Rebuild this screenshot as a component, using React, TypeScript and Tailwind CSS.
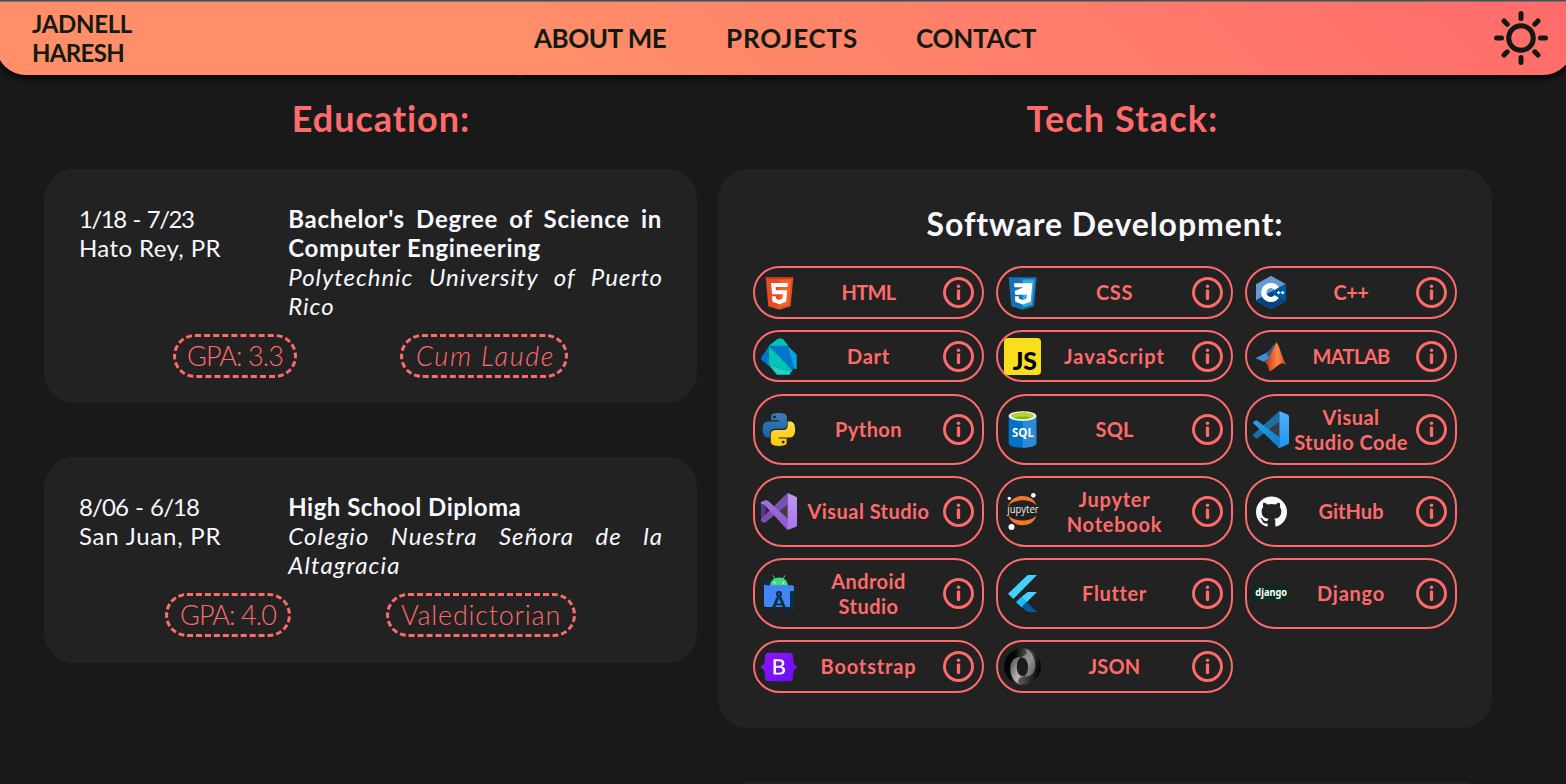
import React from "react";
import { SiBootstrap, SiGithub } from "react-icons/si";

const Svg = ({ children }: { children: React.ReactNode }) => (
  <svg viewBox="0 0 111 111" className="h-[37px] w-[37px] shrink-0 overflow-visible">
    {children}
  </svg>
);

const Html = () => (
  <Svg>
    <path d="M14 10H97L89 97L55.500 107L22 97Z" fill="#e44d26" />
    <path d="M55.500 16H90L83 92L55.500 100Z" fill="#f16529" />
    <path d="M14 10H97L96.500 14H14.500Z" fill="#b93c1c" />
    <path d="M30 27H81L79.500 39H44L45 49H78.500L75.500 83L55 91L34.500 83L33 67H44.500L45.500 74L55 78L64.500 74L66 61H33.500Z" fill="#fff" />
  </Svg>
);

const Css = () => (
  <Svg>
    <path d="M14 10H98L90 97L56 107L22 97Z" fill="#1572b6" />
    <path d="M56 16H91L84 92L56 100Z" fill="#33a9dc" />
    <path d="M30 28H85L80 83L56 91.500L34 83L33 67H44.500L45.500 74L56 78L67.500 74L69 62H34L32 51L58 40H31Z" fill="#fff" />
  </Svg>
);

const Cpp = () => (
  <Svg>
    <g strokeLinejoin="round" strokeWidth="4">
      <path d="M54 8L97 32V79L54 103L11 79V32Z" fill="#659ad2" stroke="#659ad2" />
      <path d="M54 56L97 32V79Z" fill="#00599c" stroke="#00599c" />
      <path d="M11 80L54 56L97 79L54 103Z" fill="#004482" stroke="#004482" />
      <path d="M54 56L97 32V79Z" fill="#00599c" />
    </g>
    <path d="M71 44A21 21 0 1 0 71 67" fill="none" stroke="#fff" strokeWidth="15.500" />
    <path d="M72 56H82M77 51V61M84 56H94M89 51V61" stroke="#fff" strokeWidth="3.600" />
  </Svg>
);

const Dart = () => (
  <Svg>
    <path d="M23 24L46 5Q57 -3 66 3L80 20V25Z" fill="#00c4b3" />
    <path d="M24 23V84L20 82L1 65Q-1 61 2 57Z" fill="#0075c9" />
    <path d="M24 23H80L101 88L91 101Z" fill="#0075c9" />
    <path d="M80 23L107 50V93L101 94Z" fill="#00a8e1" />
    <path d="M24 24L95 98L90 102L24 82Z" fill="#00c4b3" />
    <path d="M24 82L90 101L86 110H48Z" fill="#22d3c5" />
  </Svg>
);

const Js = () => (
  <Svg>
    <rect width="111" height="111" rx="12" fill="#f7df1e" />
    <text x="26" y="95" textLength="73" lengthAdjust="spacingAndGlyphs" className="font-[Lato,sans-serif] text-[72px] font-black" fill="#000">JS</text>
  </Svg>
);

const Matlab = () => (
  <Svg>
    <defs>
      <linearGradient id="mlOrange" x1="0" x2="1">
        <stop offset="0" stopColor="#a32b25" />
        <stop offset=".3" stopColor="#e2542d" />
        <stop offset=".6" stopColor="#fb8a44" />
        <stop offset="1" stopColor="#b5382c" />
      </linearGradient>
    </defs>
    <path d="M7 61L34 47Q48 44 63 18L58 42L46 62L33 71Z" fill="#3f8fd6" />
    <path d="M40 46Q52 40 64 16L60 40L46 58Z" fill="#2b5f80" />
    <path d="M70 12C80 24 89 66 102 83Q91 71 83 78C70 82 63 96 49 100C47 86 42 75 33 71Q44 68 51 53T70 12Z" fill="url(#mlOrange)" />
  </Svg>
);

const snake =
  "M14.25.18l.9.2.73.26.59.3.45.32.34.34.25.34.16.33.1.3.04.26.02.2-.01.13V8.5l-.05.63-.13.55-.21.46-.26.38-.3.31-.33.25-.35.19-.35.14-.33.1-.3.07-.26.04-.21.02H8.77l-.69.05-.59.14-.5.22-.41.27-.33.32-.27.35-.2.36-.15.37-.1.35-.07.32-.04.27-.02.21v3.06H3.17l-.21-.03-.28-.07-.32-.12-.35-.18-.36-.26-.36-.36-.35-.46-.32-.59-.28-.73-.21-.88-.14-1.05-.05-1.23.06-1.22.16-1.04.24-.87.32-.71.36-.57.4-.44.42-.33.42-.24.4-.16.36-.1.32-.05.24-.01h.16l.06.01h8.16v-.83H6.18l-.01-2.75-.02-.37.05-.34.11-.31.17-.28.25-.26.31-.23.38-.2.44-.18.51-.15.58-.12.64-.1.71-.06.77-.04.84-.02 1.27.05zm-6.3 1.98l-.23.33-.08.41.08.41.23.34.33.22.41.09.41-.09.33-.22.23-.34.08-.41-.08-.41-.23-.33-.33-.22-.41-.09-.41.09z";

const Python = () => (
  <Svg>
    <defs>
      <linearGradient id="pyBlue" x1="0" y1="0" x2="0" y2="1">
        <stop offset="0" stopColor="#3b7ebb" />
        <stop offset="1" stopColor="#1a62a5" />
      </linearGradient>
      <linearGradient id="pyYellow" x1="0" y1="0" x2="0" y2="1">
        <stop offset="0" stopColor="#ffc800" />
        <stop offset="1" stopColor="#ffdc4c" />
      </linearGradient>
    </defs>
    <g transform="translate(5 6) scale(4.080)">
      <path d={snake} fill="url(#pyBlue)" />
      <path d={snake} fill="url(#pyYellow)" transform="rotate(180 11.900 12.100)" />
    </g>
  </Svg>
);

const Sql = () => (
  <Svg>
    <path d="M14 15V97C14 115 97 115 97 97V15Z" fill="#0072c6" />
    <path d="M56 15V110.500C78 110 97 105 97 97V15Z" fill="#2b8bd6" />
    <ellipse cx="55.500" cy="15" rx="41.500" ry="14.500" fill="#fff" />
    <ellipse cx="55.500" cy="14.500" rx="34" ry="10" fill="#7fba00" />
    <path d="M21.500 14C22 1 89 1 89.500 14C89 17 84 20 80 21C76 15 35 15 31 21C27 20 22 17 21.500 14Z" fill="#b8d432" />
    <text x="24" y="78" textLength="66" lengthAdjust="spacingAndGlyphs" className="font-['Open_Sans',sans-serif] text-[36px] font-bold" fill="#fff">SQL</text>
  </Svg>
);

const VsCode = () => (
  <Svg>
    <defs>
      <linearGradient id="vscBand" x1="0" y1="0" x2="1" y2="1">
        <stop offset="0" stopColor="#2aa0ea" />
        <stop offset="1" stopColor="#0b7fcb" />
      </linearGradient>
      <linearGradient id="vscPanel" x1="0" y1="0" x2="0" y2="1">
        <stop offset="0" stopColor="#4fb0f7" />
        <stop offset="1" stopColor="#2196f3" />
      </linearGradient>
    </defs>
    <path d="M78 31V80L48 56Z" fill="#3d3d40" />
    <path d="M79 0V32L11 84L1 75Q-1 72 2 69Z" fill="#1d6da6" />
    <path d="M1 37Q-1 34 2 32L10 27L79 79V111Z" fill="url(#vscBand)" />
    <path d="M79 0L105 11Q108 13 108 16V95Q108 98 105 100L80 111Q74 110 77 107L79 103Z" fill="url(#vscPanel)" />
  </Svg>
);

const VisualStudio = () => (
  <Svg>
    <defs>
      <linearGradient id="vsBand" x1="0" y1="0" x2="1" y2="1">
        <stop offset="0" stopColor="#a377d8" />
        <stop offset="1" stopColor="#8a55cc" />
      </linearGradient>
      <linearGradient id="vsPanel" x1="0" y1="0" x2="0" y2="1">
        <stop offset="0" stopColor="#c198f2" />
        <stop offset="1" stopColor="#a973ec" />
      </linearGradient>
    </defs>
    <path d="M81 33V78L54 56Z" fill="#3e3e40" />
    <path d="M0 27L14 22V89L0 84Z" fill="#5b3590" />
    <path d="M14 40V72L30 56Z" fill="#35224f" />
    <path d="M79 0L81 34L14 88Q6 90 1 84L0 78Z" fill="#7c4fb5" />
    <path d="M0 27L14 22Q19 21 22 24L81 78V111L77 109L11 36Q5 32 0 33Z" fill="url(#vsBand)" />
    <path d="M80 0L105 11Q108 12 108 15V97Q108 100 105 101L80 111Z" fill="url(#vsPanel)" />
  </Svg>
);

const Jupyter = () => (
  <Svg>
    <path d="M14 37C24 0 87 0 97 37C80 17 31 17 14 37Z" fill="#f37726" />
    <path d="M14 68C24 106 87 106 97 68C80 87 31 87 14 68Z" fill="#f37726" />
    <circle cx="88" cy="7" r="7" fill="#fff" />
    <circle cx="16" cy="16" r="5" fill="#fff" />
    <circle cx="22.500" cy="102" r="9" fill="#fff" />
    <text x="10" y="60" textLength="94" lengthAdjust="spacingAndGlyphs" className="font-['Open_Sans',sans-serif] text-[31px]" fill="#f2f2f5">jupyter</text>
  </Svg>
);

const AndroidStudio = () => (
  <Svg>
    <path d="M10 31V20Q10 14 17 14H38V31ZM87 45H99V104Q99 111 93 111T87 104Z" fill="#073042" />
    <path d="M27 33C28 -1 80 -1 81 33Z" fill="#3ddc84" />
    <path d="M42 12L36 1M66 12L72 1" stroke="#3ddc84" strokeWidth="3" />
    <circle cx="41" cy="23" r="2.500" fill="#fff" />
    <circle cx="67" cy="23" r="2.500" fill="#fff" />
    <path d="M16 31H93Q99 31 99 38V48H87V96H16Q9 96 9 89V26Q10 31 16 31Z" fill="#4285f4" />
    <path d="M54 48V58M51 66L34 108M57 66L74 108" stroke="#073042" strokeWidth="9" />
    <path d="M41 84Q54 94 67 84" fill="none" stroke="#073042" strokeWidth="5" />
    <circle cx="54" cy="57" r="9" fill="#073042" />
    <circle cx="54" cy="57" r="3" fill="#2b62b8" />
  </Svg>
);

const Flutter = () => (
  <Svg>
    <path d="M71 0H99L28 72L12 56Z" fill="#44d1fd" />
    <path d="M71 51H99L68 82L52 66Z" fill="#44d1fd" />
    <path d="M52 97L68 81L99 111H71Z" fill="#08589c" />
    <path d="M36 81L52 66L68 81L52 97Z" fill="#1fbcfd" />
  </Svg>
);

const Bootstrap = () => (
  <span className="flex h-[37px] w-[37px] shrink-0 items-center">
    <svg className="absolute h-0 w-0">
      <linearGradient id="bsPurple" x1="0" y1="0" x2="1" y2="1">
        <stop offset="0" stopColor="#9013fe" />
        <stop offset="1" stopColor="#6610f2" />
      </linearGradient>
    </svg>
    <span className="flex h-9 w-9 items-center justify-center bg-[linear-gradient(#fff,#fff)] bg-[length:16px_20px] bg-center bg-no-repeat">
      <SiBootstrap className="h-9 w-9" style={{ fill: "url(#bsPurple)" }} />
    </span>
  </span>
);

const Github = () => (
  <span className="flex h-[37px] w-[37px] shrink-0 items-center pl-[3px]">
    <SiGithub className="h-[31px] w-[31px] text-[#f8f8ff]" />
  </span>
);

const Django = () => (
  <Svg>
    <rect y="31" width="109" height="48" rx="2" fill="#092e20" />
    <text x="7" y="64" textLength="95" lengthAdjust="spacingAndGlyphs" className="font-['Noto_Sans',sans-serif] text-[34px] font-bold" fill="#fff">django</text>
  </Svg>
);

const Json = () => (
  <Svg>
    <defs>
      <linearGradient id="jsBase" x1="0" y1=".4" x2="1" y2=".6">
        <stop offset="0" stopColor="#000" />
        <stop offset=".25" stopColor="#0a0a0a" />
        <stop offset=".55" stopColor="#555" />
        <stop offset=".85" stopColor="#1c1c1c" />
        <stop offset="1" stopColor="#000" />
      </linearGradient>
      <linearGradient id="jsL" x1="0" y1="0" x2="1" y2="1">
        <stop offset="0" stopColor="#4c4c4c" />
        <stop offset=".65" stopColor="#b8b8b8" />
        <stop offset="1" stopColor="#666" />
      </linearGradient>
      <linearGradient id="jsR" x1="0" y1="0" x2="1" y2="1">
        <stop offset="0" stopColor="#777" />
        <stop offset=".5" stopColor="#969696" />
        <stop offset="1" stopColor="#555" />
      </linearGradient>
    </defs>
    <circle cx="55.500" cy="55.500" r="55" fill="url(#jsBase)" />
    <path d="M62 1C82 10 94 28 94 50C94 74 82 86 63 86C78 72 76 28 52 28C60 22 78 20 62 1Z" fill="url(#jsR)" />
    <path d="M49 110C29 101 19 84 19 62C19 38 32 27 49 28C33 42 36 84 58 85C50 90 36 94 49 110Z" fill="url(#jsL)" />
    <ellipse cx="55" cy="56.500" rx="16.500" ry="27" fill="#1c1c1c" />
  </Svg>
);

type Skill = { name: string; track: string; Icon: () => React.JSX.Element };

const skills: Skill[] = [
  { name: "HTML", track: "tracking-[-0.67px]", Icon: Html },
  { name: "CSS", track: "tracking-[0.61px]", Icon: Css },
  { name: "C++", track: "tracking-[-0.48px]", Icon: Cpp },
  { name: "Dart", track: "tracking-[0.75px]", Icon: Dart },
  { name: "JavaScript", track: "tracking-[1.08px]", Icon: Js },
  { name: "MATLAB", track: "tracking-[-0.64px]", Icon: Matlab },
  { name: "Python", track: "tracking-[0.43px]", Icon: Python },
  { name: "SQL", track: "tracking-[0.16px]", Icon: Sql },
  { name: "Visual\nStudio Code", track: "tracking-[0.47px]", Icon: VsCode },
  { name: "Visual Studio", track: "tracking-[0.45px]", Icon: VisualStudio },
  { name: "Jupyter\nNotebook", track: "tracking-[0.75px]", Icon: Jupyter },
  { name: "GitHub", track: "tracking-[0.03px]", Icon: Github },
  { name: "Android\nStudio", track: "tracking-[0.45px]", Icon: AndroidStudio },
  { name: "Flutter", track: "tracking-[0.64px]", Icon: Flutter },
  { name: "Django", track: "tracking-[0.76px]", Icon: Django },
  { name: "Bootstrap", track: "tracking-[0.85px]", Icon: Bootstrap },
  { name: "JSON", track: "tracking-[0.22px]", Icon: Json },
];

const Info = () => (
  <svg viewBox="0 0 31 31" className="h-[31px] w-[31px] shrink-0" fill="none" stroke="#ff6b6b">
    <circle cx="15.500" cy="15.500" r="14" strokeWidth="2.900" />
    <circle cx="15.500" cy="9.300" r="1.800" fill="#ff6b6b" stroke="none" />
    <path d="M15.500 13.800V21.500" strokeWidth="3.300" strokeLinecap="round" />
  </svg>
);

const SkillPill = ({ name, track, Icon }: Skill) => (
  <li className="flex items-center rounded-[30px] border-2 border-[#ff6b6b] pr-[8px] pl-[6px]">
    <Icon />
    <span className={`flex-1 pr-[4px] text-center text-[20px] leading-[25px] font-bold whitespace-pre text-[#ff6b6b] ${track}`}>{name}</span>
    <Info />
  </li>
);

const tag = "h-11 rounded-[22px] border-[3px] border-dashed border-[#ff6b6b] text-center text-[27px] leading-[37px] font-light whitespace-nowrap text-[#ff6b6b]";

const Sun = () => (
  <svg viewBox="0 0 56 56" className="h-14 w-14" fill="none" stroke="#121a12" strokeWidth="5" strokeLinecap="round">
    <circle cx="28" cy="28" r="12.300" />
    <path d="M28 3.500V8.500M28 47.500V52.500M3.500 28H8.500M47.500 28H52.500M11 11L14.200 14.200M41.800 41.800L45 45M45 11L41.800 14.200M14.200 41.800L11 45" />
  </svg>
);

export default function App() {
  return (
    <div className="relative h-[784px] w-full overflow-hidden bg-[#191919] font-[Lato,sans-serif] text-[#f8f8ff]">
      <div className="h-px bg-[#4d5a63]" />
      <div className="absolute top-[73px] left-[515px] h-[4px] w-[10px] rounded-full bg-[#4a4a4c]" />
      <div className="absolute top-[73px] left-[728px] h-[4px] w-[10px] rounded-full bg-[#4a4a4c]" />
      <header className="relative -ml-[4px] grid h-[74px] w-[1577px] grid-cols-[538px_1fr_61px] rounded-b-[30px] border-t border-[#8a6f68] bg-[linear-gradient(45deg,#ff8e69_35%,#ff6b6b)] pr-[22px] text-[#121a12] shadow-[0_3px_6px_#000]">
        <div className="pt-[7px] pl-[36px] text-[24px] leading-[29px] font-bold">
          <div className="tracking-[-0.31px]">JADNELL</div>
          <div className="tracking-[-0.67px]">HARESH</div>
        </div>
        <nav className="flex items-center text-[26px] font-bold">
          <a className="w-[192px] tracking-[-0.49px]">ABOUT ME</a>
          <a className="w-[190px] tracking-[0.81px]">PROJECTS</a>
          <a className="tracking-[-0.27px]">CONTACT</a>
        </nav>
        <div className="-mt-px flex items-center justify-center">
          <Sun />
        </div>
      </header>

      <main className="flex items-start gap-[21px] pt-[21px] pl-[44px]">
        <section className="w-[653px]">
          <h2 className="pl-[21px] text-center text-[36px] leading-[45px] font-bold tracking-[0.94px] text-[#ff6b6b]">Education:</h2>
          <article className="mt-[28px] h-[234px] rounded-[30px] bg-[#222] px-[35px] pt-[35px]">
            <div className="flex text-[24px] leading-[29px]">
              <div className="w-[210px]">
                <div className="tracking-[-1.5px] [word-spacing:2.2px]">1/18 - 7/23</div>
                <div className="tracking-[0.4px]">Hato Rey, PR</div>
              </div>
              <div className="w-[375px] text-justify">
                <div className="font-bold tracking-[0.68px]">Bachelor's Degree of Science in Computer Engineering</div>
                <div className="-mr-px tracking-[0.95px] italic">Polytechnic University of Puerto Rico</div>
              </div>
            </div>
            <div className="mt-[14px] flex gap-[103px] pl-[94px]">
              <div className={`${tag} w-[124px] tracking-[-0.91px]`}>GPA: 3.3</div>
              <div className={`${tag} w-[168px] pl-[3px] tracking-[1.6px] italic`}>Cum Laude</div>
            </div>
          </article>
          <article className="mt-[54px] h-[206px] rounded-[30px] bg-[#222] px-[35px] pt-[35px]">
            <div className="flex text-[24px] leading-[29px]">
              <div className="w-[210px]">
                <div className="tracking-[-0.9px] [word-spacing:1.8px]">8/06 - 6/18</div>
                <div className="tracking-[0.76px]">San Juan, PR</div>
              </div>
              <div className="w-[375px] text-justify">
                <div className="font-bold tracking-[0.48px]">High School Diploma</div>
                <div className="-mr-px tracking-[1.1px] italic">Colegio Nuestra Señora de la Altagracia</div>
              </div>
            </div>
            <div className="mt-[14px] flex gap-[95px] pl-[86px]">
              <div className={`${tag} w-[126px] tracking-[-0.9px]`}>GPA: 4.0</div>
              <div className={`${tag} w-[190px] tracking-[0.75px]`}>Valedictorian</div>
            </div>
          </article>
        </section>

        <section className="w-[774px]">
          <h2 className="pl-[35px] text-center text-[36px] leading-[45px] font-bold tracking-[1.15px] text-[#ff6b6b]">Tech Stack:</h2>
          <article className="mt-[28px] h-[559px] rounded-[30px] bg-[#222] px-[35px] pt-[35px]">
            <h3 className="text-center text-[32px] leading-[40px] font-bold tracking-[0.92px]">Software Development:</h3>
            <ul className="mt-[22px] grid grid-cols-[231px_237px_212px] grid-rows-[53px_53px_71px_71px_71px_53px] gap-x-[12px] gap-y-[11px] [&>li:nth-child(n+4):nth-child(-n+6)]:mb-px">
              {skills.map((s) => (
                <SkillPill key={s.name} {...s} />
              ))}
            </ul>
          </article>
          <div className="mt-[54px] h-[60px] w-[774px] rounded-[30px] bg-[#222]" />
        </section>
      </main>
    </div>
  );
}
